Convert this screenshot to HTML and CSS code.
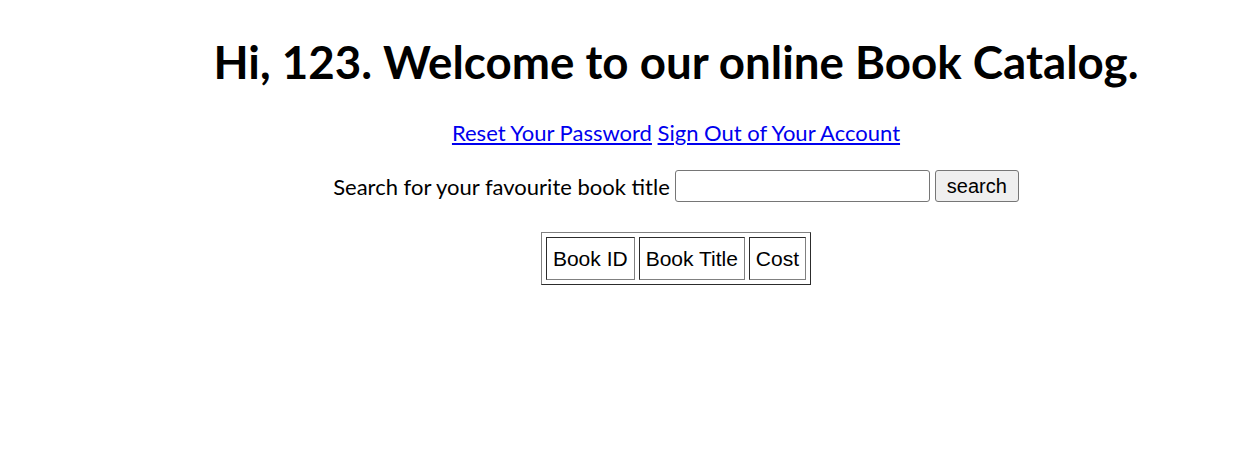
FILE: index.html
```html
<!DOCTYPE html>
<html>
<head>
<meta charset="utf-8">
<link rel="stylesheet" href="styles.css">
</head>
<body>
<div class="page">
  <h1 class="title">Hi, 123. Welcome to our online Book Catalog.</h1>
  <p class="links"><a href="#">Reset Your Password</a> <a href="#">Sign Out of Your Account</a></p>
  <form class="search">
    <label class="search-label">Search for your favourite book title</label>
    <input class="search-input" type="text">
    <button class="search-btn" type="button">search</button>
  </form>
  <table class="books" border="1">
    <tr><td>Book ID</td><td>Book Title</td><td>Cost</td></tr>
  </table>
</div>
</body>
</html>
```
FILE: styles.css
```css
html, body { margin: 0; padding: 0; background: #fff; }
body { font-family: "Lato", "Open Sans", sans-serif; color: #000; }
.page { padding: 0 0 0 92px; text-align: center; }
.title { font-size: 45.7px; font-weight: 700; margin: 0; padding-top: 32px; line-height: 60px; }
.links { font-size: 22px; margin: 26px 0 0; line-height: 30px; }
.links a { color: #0000ee; }
.search { margin: 22px 0 0; display: flex; justify-content: center; align-items: center; gap: 5px; font-size: 22px; }
.search-input { width: 255px; height: 32px; box-sizing: border-box; border: 1px solid #767676; border-radius: 3px; padding: 0 4px; }
.search-btn { height: 32px; box-sizing: border-box; font-family: "Liberation Sans", Arial, sans-serif; font-size: 20px; border: 1px solid #767676; border-radius: 3px; background: #efefef; padding: 0 11px; color: #000; }
.books { margin: 30px auto 0; font-family: "Liberation Sans", Arial, sans-serif; font-size: 21px; border-spacing: 4px; }
.books td { padding: 9px 6px 8px; }
```
